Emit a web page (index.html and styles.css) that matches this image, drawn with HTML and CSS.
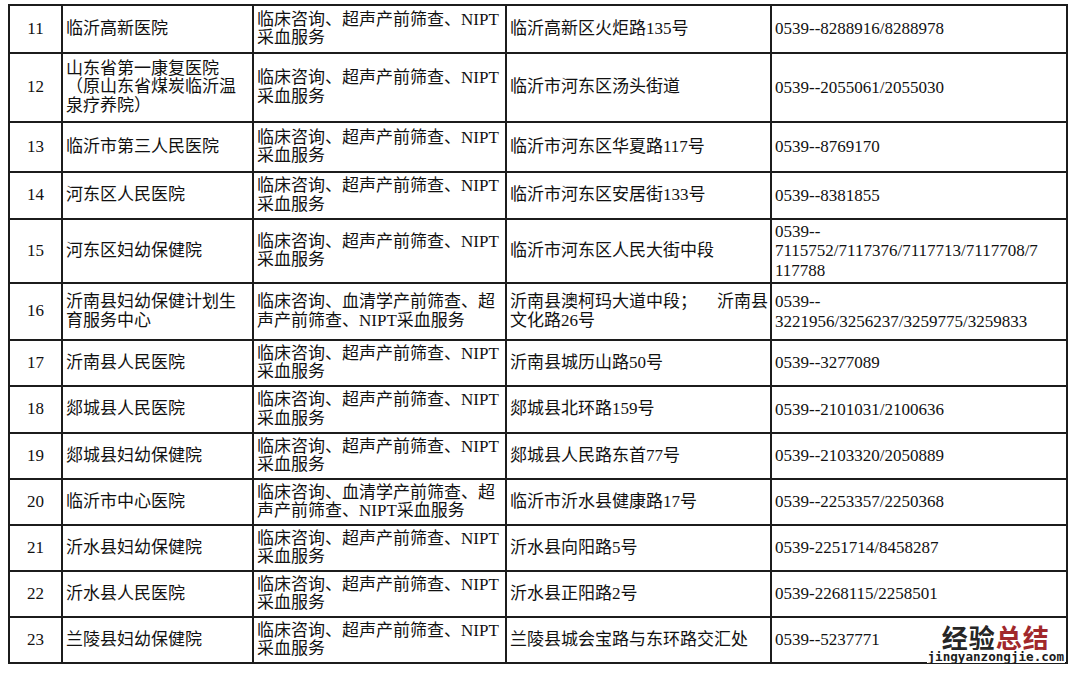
FILE: index.html
```html
<!DOCTYPE html>
<html lang="zh-CN">
<head>
<meta charset="utf-8">
<title>临沂市产前筛查机构</title>
<link rel="stylesheet" href="styles.css">
</head>
<body>
<div class="sheet">
<table class="grid">
<colgroup>
<col class="c-no"><col class="c-name"><col class="c-svc"><col class="c-addr"><col class="c-tel">
</colgroup>
<tbody>
<tr class="r48"><td class="no">11</td><td>临沂高新医院</td><td>临床咨询、超声产前筛查、NIPT<br>采血服务</td><td>临沂高新区火炬路135号</td><td class="tel">0539--8288916/8288978</td></tr>
<tr class="r69"><td class="no">12</td><td>山东省第一康复医院<br>（原山东省煤炭临沂温<br>泉疗养院）</td><td>临床咨询、超声产前筛查、NIPT<br>采血服务</td><td>临沂市河东区汤头街道</td><td class="tel">0539--2055061/2055030</td></tr>
<tr class="r50"><td class="no">13</td><td>临沂市第三人民医院</td><td>临床咨询、超声产前筛查、NIPT<br>采血服务</td><td>临沂市河东区华夏路117号</td><td class="tel">0539--8769170</td></tr>
<tr class="r47"><td class="no">14</td><td>河东区人民医院</td><td>临床咨询、超声产前筛查、NIPT<br>采血服务</td><td>临沂市河东区安居街133号</td><td class="tel">0539--8381855</td></tr>
<tr class="r64"><td class="no">15</td><td>河东区妇幼保健院</td><td>临床咨询、超声产前筛查、NIPT<br>采血服务</td><td>临沂市河东区人民大街中段</td><td class="tel">0539--<br>7115752/7117376/7117713/7117708/7<br>117788</td></tr>
<tr class="r57"><td class="no">16</td><td>沂南县妇幼保健计划生<br>育服务中心</td><td>临床咨询、血清学产前筛查、超<br>声产前筛查、NIPT采血服务</td><td><span class="split"><span>沂南县澳柯玛大道中段；</span><span>沂南县</span></span>文化路26号</td><td class="tel">0539--<br>3221956/3256237/3259775/3259833</td></tr>
<tr class="r46"><td class="no">17</td><td>沂南县人民医院</td><td>临床咨询、超声产前筛查、NIPT<br>采血服务</td><td>沂南县城历山路50号</td><td class="tel">0539--3277089</td></tr>
<tr class="r47"><td class="no">18</td><td>郯城县人民医院</td><td>临床咨询、超声产前筛查、NIPT<br>采血服务</td><td>郯城县北环路159号</td><td class="tel">0539--2101031/2100636</td></tr>
<tr class="r46"><td class="no">19</td><td>郯城县妇幼保健院</td><td>临床咨询、超声产前筛查、NIPT<br>采血服务</td><td>郯城县人民路东首77号</td><td class="tel">0539--2103320/2050889</td></tr>
<tr class="r46"><td class="no">20</td><td>临沂市中心医院</td><td>临床咨询、血清学产前筛查、超<br>声产前筛查、NIPT采血服务</td><td>临沂市沂水县健康路17号</td><td class="tel">0539--2253357/2250368</td></tr>
<tr class="r46"><td class="no">21</td><td>沂水县妇幼保健院</td><td>临床咨询、超声产前筛查、NIPT<br>采血服务</td><td>沂水县向阳路5号</td><td class="tel">0539-2251714/8458287</td></tr>
<tr class="r46"><td class="no">22</td><td>沂水县人民医院</td><td>临床咨询、超声产前筛查、NIPT<br>采血服务</td><td>沂水县正阳路2号</td><td class="tel">0539-2268115/2258501</td></tr>
<tr class="r46"><td class="no">23</td><td>兰陵县妇幼保健院</td><td>临床咨询、超声产前筛查、NIPT<br>采血服务</td><td>兰陵县城会宝路与东环路交汇处</td><td class="tel">0539--5237771</td></tr>
</tbody>
</table>
<div class="mark">
<div class="mark-title"><span class="dark">经验</span><span class="red">总结</span></div>
<div class="mark-url">jingyanzongjie.com</div>
</div>
</div>
</body>
</html>
```
FILE: styles.css
```css
html, body {
  background: #fff;
}
body {
  margin: 4px 0 0 8px;
  color: #111;
  font-family: "Liberation Serif", "Noto Sans CJK SC", serif;
  font-size: 17px;
}
.sheet {
  position: relative;
  width: 1060px;
}
.grid {
  border-collapse: collapse;
  table-layout: fixed;
  width: 1060px;
}
.c-no { width: 53px; }
.c-name { width: 191px; }
.c-svc { width: 253px; }
.c-addr { width: 265px; }
.c-tel { width: 296px; }
.grid td {
  border: 2px solid #1c1c1c;
  padding: 0 2px 0 3px;
  vertical-align: middle;
  line-height: 18.5px;
  overflow: hidden;
}
.grid td.no {
  text-align: center;
  padding: 0;
}
.grid td.tel {
  font-size: 17px;
  line-height: 19.5px;
  white-space: nowrap;
  padding-left: 3px;
}
.split {
  display: flex;
  justify-content: space-between;
}
.r46 td { height: 44px; }
.r47 td { height: 45px; }
.r48 td { height: 46px; }
.r50 td { height: 48px; }
.r57 td { height: 55px; }
.r64 td { height: 62px; }
.r69 td { height: 67px; }
.mark {
  position: absolute;
  right: 3px;
  bottom: 1px;
  display: flex;
  flex-direction: column;
  align-items: center;
  gap: 1px;
}
.mark-title {
  font-family: "Noto Sans CJK SC", sans-serif;
  font-weight: 700;
  font-size: 26px;
  line-height: 24px;
  letter-spacing: 1px;
}
.mark-title .dark { color: #262626; }
.mark-title .red { color: #a1282b; }
.mark-url {
  font-family: "DejaVu Sans Mono", monospace;
  font-weight: 700;
  font-size: 12.6px;
  line-height: 13px;
  color: #1c1c1c;
  background: #fff;
  padding: 0 1px;
}
```
